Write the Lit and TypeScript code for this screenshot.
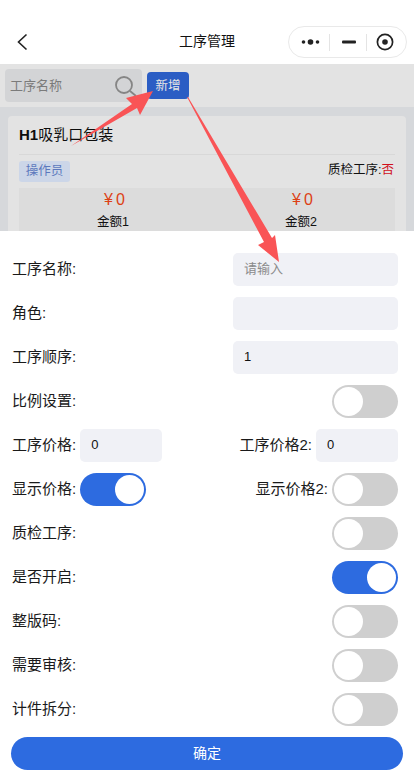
import { LitElement, html, css } from 'lit';
import { customElement, state } from 'lit/decorators.js';

@customElement('app-root')
export class AppRoot extends LitElement {
  static styles = css`
    :host {
      display: block;
      width: 414px;
      height: 780px;
      position: relative;
      overflow: hidden;
      background: #fff;
      color: #111;
      font-family: "Liberation Sans", "Noto Sans CJK SC", sans-serif;
      font-size: 14px;
    }

    .header {
      height: 64px;
      display: flex;
      align-items: center;
      justify-content: center;
      position: relative;
      background: #fff;
      padding-top: 18px;
      box-sizing: border-box;
    }

    .title {
      font-size: 14px;
      line-height: 20px;
      margin-bottom: 1px;
    }

    .back {
      position: absolute;
      left: 16px;
      top: 33px;
      width: 12px;
      height: 18px;
    }

    .capsule {
      position: absolute;
      left: 288px;
      top: 26px;
      width: 119px;
      height: 32px;
      box-sizing: border-box;
      border: 1px solid #e9e9e9;
      border-radius: 16px;
      display: flex;
      align-items: center;
    }

    .capsule div {
      flex: 1;
      display: flex;
      align-items: center;
      justify-content: center;
      height: 17px;
    }

    .capsule div + div {
      border-left: 1px solid #e4e4e4;
    }

    .capsule .dots {
      padding-left: 5px;
    }

    .capsule .dash {
      padding-left: 2px;
    }

    .capsule .record {
      padding-right: 4px;
    }

    .behind {
      height: 167px;
      overflow: hidden;
      background: #d6d8db;
    }

    .search-bar {
      height: 43px;
      background: #e3e3e3;
      display: flex;
      align-items: center;
      padding: 0 5px;
      gap: 5px;
    }

    .search {
      width: 137px;
      height: 33px;
      border-radius: 4px;
      background: #d3d4d6;
      display: flex;
      align-items: center;
      justify-content: space-between;
      padding: 0 7px 0 5px;
      box-sizing: border-box;
      color: #7b7b7b;
      font-size: 13px;
    }

    .search span {
      margin-bottom: 3px;
    }

    .search svg {
      margin-top: 2px;
      margin-right: -3px;
    }

    .add {
      width: 42px;
      height: 27px;
      border-radius: 4px;
      background: #2b5dc4;
      color: #e6e6e6;
      font-size: 12.5px;
      display: flex;
      align-items: center;
      justify-content: center;
      padding-bottom: 2px;
      box-sizing: border-box;
    }

    .card {
      margin: 9px 8px 0;
      background: #e3e3e3;
      border-radius: 4px;
      padding: 0 11px;
      height: 140px;
    }

    .card-title {
      height: 38px;
      line-height: 37px;
      font-size: 15px;
      color: #0d0d0d;
      border-bottom: 1px solid #d8d8d8;
    }

    .card-title b {
      font-weight: 700;
    }

    .card-meta {
      display: flex;
      align-items: flex-start;
      justify-content: space-between;
      padding-top: 6px;
      height: 21px;
      font-size: 12.5px;
      padding-right: 1px;
    }

    .tag {
      width: 51px;
      height: 21px;
      line-height: 21px;
      text-align: center;
      border-radius: 3px;
      background: #ccd6e8;
      color: #5c79bd;
    }

    .check {
      line-height: 18px;
    }

    .no {
      color: #d0101c;
    }

    .stats {
      margin-top: 6px;
      height: 60px;
      background: #dcdcdc;
      display: grid;
      grid-template-columns: 1fr 1fr;
      text-align: center;
      font-size: 12.5px;
    }

    .amount {
      color: #dd4115;
      font-size: 16px;
      line-height: 20px;
      margin-top: 2px;
      padding-left: 6px;
      letter-spacing: 3px;
    }

    .stat-label {
      line-height: 20px;
      margin-top: 2px;
    }

    .form {
      display: flex;
      flex-direction: column;
      gap: 11px;
      padding: 22px 16px 0 12px;
    }

    .row {
      height: 33px;
      display: flex;
      align-items: center;
      justify-content: space-between;
      font-size: 15px;
      color: #1a1a1a;
    }

    .row span.label {
      margin-bottom: 4px;
    }

    .group {
      display: flex;
      align-items: center;
      gap: 4px;
    }

    input {
      box-sizing: border-box;
      border: none;
      outline: none;
      height: 33px;
      border-radius: 5px;
      background: #f0f1f6;
      padding: 0 11px 2px;
      font: inherit;
      font-size: 13px;
      color: #111;
    }

    input::placeholder {
      color: #8b8b8b;
    }

    .wide {
      width: 165px;
    }

    .narrow {
      width: 82px;
    }

    .toggle {
      width: 66px;
      height: 33px;
      border: none;
      border-radius: 17px;
      padding: 2px;
      background: #cfcfcf;
      display: flex;
      justify-content: flex-start;
      cursor: pointer;
      box-sizing: border-box;
    }

    .toggle.on {
      background: #2d6be0;
      justify-content: flex-end;
    }

    .toggle span {
      width: 29px;
      height: 29px;
      border-radius: 50%;
      background: #fff;
    }

    .confirm {
      display: block;
      margin: 11px 0 0 11px;
      width: 392px;
      height: 33px;
      border: none;
      border-radius: 17px;
      background: #2d6be0;
      color: #fff;
      font: inherit;
      font-size: 14px;
      padding: 0 0 4px;
    }

    .arrows {
      position: absolute;
      left: 0;
      top: 0;
      pointer-events: none;
    }
  `;

  @state() private toggles: Record<string, boolean> = {
    ratio: false,
    showPrice: true,
    showPrice2: false,
    qc: false,
    open: true,
    board: false,
    review: false,
    split: false,
  };

  private flip(key: string) {
    this.toggles = { ...this.toggles, [key]: !this.toggles[key] };
  }

  private renderToggle(key: string) {
    return html`
      <button class="toggle ${this.toggles[key] ? 'on' : ''}" @click=${() => this.flip(key)}>
        <span></span>
      </button>
    `;
  }

  private renderToggleRow(label: string, key: string) {
    return html`<div class="row"><span class="label">${label}:</span>${this.renderToggle(key)}</div>`;
  }

  private renderHeader() {
    return html`
      <div class="header">
        <svg class="back" viewBox="0 0 12 18">
          <path d="M10.5 1.5 2.5 9l8 7.5" fill="none" stroke="#222" stroke-width="1.6" />
        </svg>
        <div class="title">工序管理</div>
        <div class="capsule">
          <div class="dots">
            <svg width="20" height="8" viewBox="0 0 20 8">
              <circle cx="2.5" cy="4" r="1.8" fill="#222" />
              <circle cx="9.5" cy="4" r="2.8" fill="#222" />
              <circle cx="16.5" cy="4" r="1.8" fill="#222" />
            </svg>
          </div>
          <div class="dash">
            <svg width="14" height="4" viewBox="0 0 14 4"><rect y="0.5" width="14" height="3" rx="1" fill="#222" /></svg>
          </div>
          <div class="record">
            <svg width="18" height="18" viewBox="0 0 18 18">
              <circle cx="9" cy="9" r="7.6" fill="none" stroke="#222" stroke-width="1.7" />
              <circle cx="9" cy="9" r="2.8" fill="#222" />
            </svg>
          </div>
        </div>
      </div>
    `;
  }

  private renderBehind() {
    return html`
      <div class="behind">
        <div class="search-bar">
          <div class="search">
            <span>工序名称</span>
            <svg width="24" height="24" viewBox="0 0 24 24">
              <circle cx="10" cy="10" r="8" fill="none" stroke="#858585" stroke-width="1.8" />
              <path d="M16 16l6 5" stroke="#858585" stroke-width="1.8" />
            </svg>
          </div>
          <div class="add">新增</div>
        </div>
        <div class="card">
          <div class="card-title"><b>H1</b>吸乳口包装</div>
          <div class="card-meta">
            <div class="tag">操作员</div>
            <div class="check">质检工序:<span class="no">否</span></div>
          </div>
          <div class="stats">
            <div><div class="amount">¥0</div><div class="stat-label">金额1</div></div>
            <div><div class="amount">¥0</div><div class="stat-label">金额2</div></div>
          </div>
        </div>
      </div>
    `;
  }

  private renderForm() {
    return html`
      <div class="form">
        <div class="row"><span class="label">工序名称:</span><input class="wide" placeholder="请输入" /></div>
        <div class="row"><span class="label">角色:</span><input class="wide" /></div>
        <div class="row"><span class="label">工序顺序:</span><input class="wide" value="1" /></div>
        ${this.renderToggleRow('比例设置', 'ratio')}
        <div class="row">
          <div class="group"><span class="label">工序价格:</span><input class="narrow" value="0" /></div>
          <div class="group"><span class="label">工序价格2:</span><input class="narrow" value="0" /></div>
        </div>
        <div class="row">
          <div class="group"><span class="label">显示价格:</span>${this.renderToggle('showPrice')}</div>
          <div class="group"><span class="label">显示价格2:</span>${this.renderToggle('showPrice2')}</div>
        </div>
        ${this.renderToggleRow('质检工序', 'qc')}
        ${this.renderToggleRow('是否开启', 'open')}
        ${this.renderToggleRow('整版码', 'board')}
        ${this.renderToggleRow('需要审核', 'review')}
        ${this.renderToggleRow('计件拆分', 'split')}
      </div>
      <button class="confirm">确定</button>
    `;
  }

  render() {
    return html`
      ${this.renderHeader()}
      ${this.renderBehind()}
      ${this.renderForm()}
      <svg class="arrows" width="414" height="780" viewBox="0 0 414 780">
        <polygon points="71,146 132,104 126,98 153,91 140,115 137,108" fill="#f95456" />
        <polygon points="187,97 188,97 272,238 275,235 279,262 258,245 264,242" fill="#f95456" />
      </svg>
    `;
  }
}
